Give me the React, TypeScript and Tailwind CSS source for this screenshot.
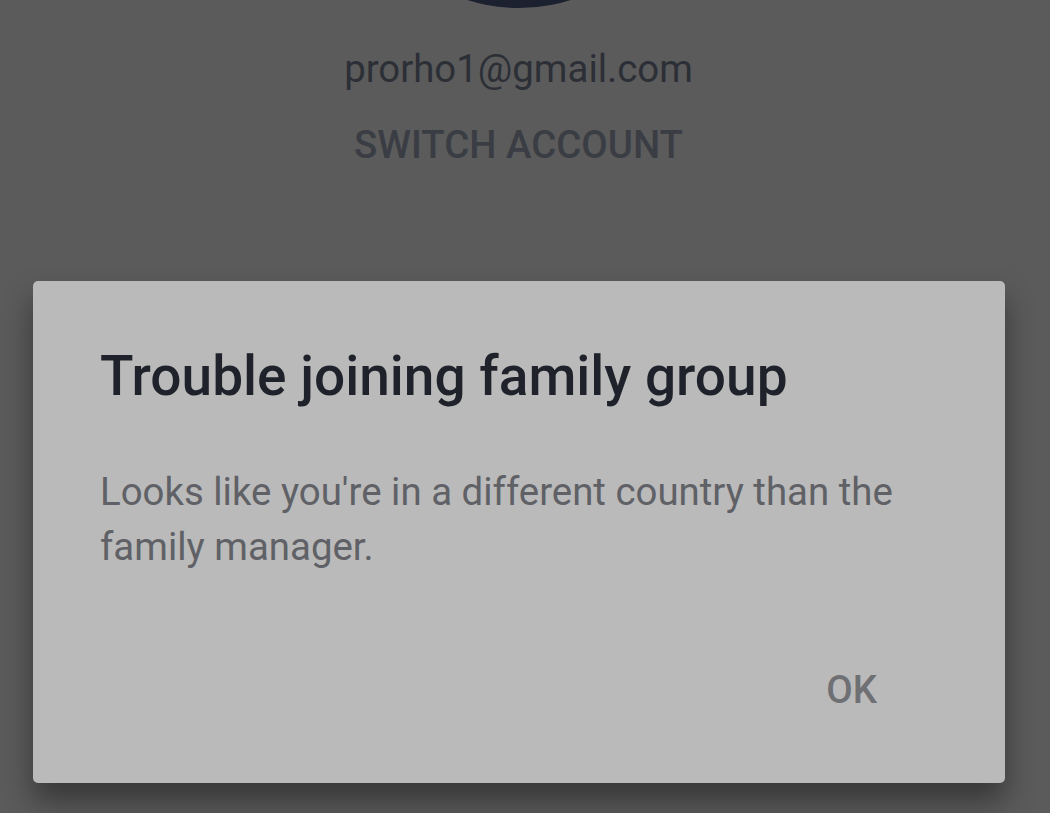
export default function App() {
  return (
    <div
      className="w-[1050px] h-[813px] overflow-hidden bg-[#5b5b5b] flex flex-col"
      style={{ fontFamily: "Roboto, 'Noto Sans', sans-serif" }}
    >
      {/* account header behind the scrim */}
      <div className="flex flex-col items-center pr-[13px]">
        <div className="w-[342px] h-[342px] rounded-full bg-[#1c2130] mt-[-334px] shrink-0" />
        <div className="mt-[33px] text-[38.4px] leading-[55px] text-[#2c2f36]">
          prorho1@gmail.com
        </div>
        <div className="mt-[21px] text-[38.4px] leading-[55px] font-medium text-[#3a3d44]">
          SWITCH ACCOUNT
        </div>
      </div>

      {/* dialog */}
      <div className="mt-[109px] ml-[33px] w-[972px] h-[502px] shrink-0 rounded-[5px] bg-[#bababa] shadow-[0_18px_30px_rgba(0,0,0,0.4)] flex flex-col pl-[67px] pr-[60px] pt-[62px]">
        <h2 className="text-[55px] leading-[67px] font-medium text-[#1f222a]">
          Trouble joining family group
        </h2>
        <p className="mt-[54px] text-[38.4px] leading-[55px] text-[#5f6166]">
          Looks like you're in a different country than the family manager.
        </p>
        <div className="mt-[88px] flex justify-end pr-[68px]">
          <button className="text-[38.4px] leading-[55px] font-medium text-[#6f7074]">OK</button>
        </div>
      </div>
    </div>
  );
}
